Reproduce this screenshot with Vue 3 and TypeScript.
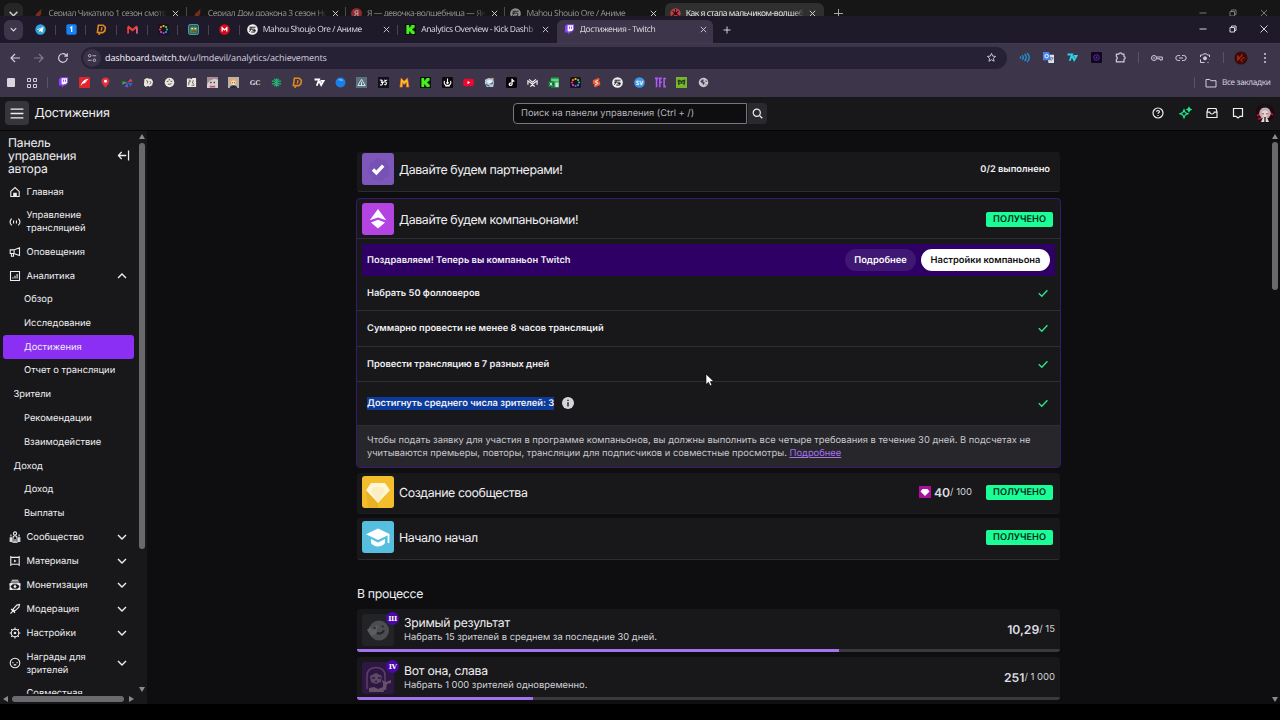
<script setup lang="ts">
interface NavItem {
  label: string
  kind: 'top' | 'sub' | 'group'
  icon?: string
  chevron?: 'up' | 'down'
  active?: boolean
  tall?: boolean
}

interface Tab {
  icon: string
  title: string
  cls?: string
}

const backTabs: Tab[] = [
  { icon: 'flame', title: 'Сериал Чикатило 1 сезон смотрет' },
  { icon: 'flame', title: 'Сериал Дом дракона 3 сезон Нов' },
  { icon: 'ya', title: 'Я — девочка-волшебница — Янд' },
  { icon: 'shikiGrey', title: 'Mahou Shoujo Ore / Аниме' },
  { icon: 'redball', title: 'Как я стала мальчиком-волшебни', cls: 'on' },
]

const pinned: string[] = ['telegram', 'one', 'donate', 'gmail', 'petals', 'frog', 'mega']

const tabs: Tab[] = [
  { icon: 'shiki', title: 'Mahou Shoujo Ore / Аниме' },
  { icon: 'kick', title: 'Analytics Overview - Kick Dashb' },
  { icon: 'twitch', title: 'Достижения - Twitch', cls: 'on' },
]

const bookmarks: string[] = [
  'twitch', 'redsq', 'pin', 'pinwheel', 'sketchA', 'sketchB', 'sketchC', 'animeA', 'animeB', 'gc',
  'clover', 'donate', 'seven', 'orb', 'tri', 'om', 'mgold', 'kick', 'anchor', 'youtube', 'animeC',
  'tiktok', 'mwave', 'sheet', 'petals', 'shopS', 'shiki', 'sv', 'tfc', 'robot', 'globe',
]

const nav: NavItem[] = [
  { label: 'Главная', kind: 'top', icon: 'home' },
  { label: 'Управление трансляцией', kind: 'top', icon: 'live', tall: true },
  { label: 'Оповещения', kind: 'top', icon: 'horn' },
  { label: 'Аналитика', kind: 'top', icon: 'chart', chevron: 'up' },
  { label: 'Обзор', kind: 'sub' },
  { label: 'Исследование', kind: 'sub' },
  { label: 'Достижения', kind: 'sub', active: true },
  { label: 'Отчет о трансляции', kind: 'sub' },
  { label: 'Зрители', kind: 'group' },
  { label: 'Рекомендации', kind: 'sub' },
  { label: 'Взаимодействие', kind: 'sub' },
  { label: 'Доход', kind: 'group' },
  { label: 'Доход', kind: 'sub' },
  { label: 'Выплаты', kind: 'sub' },
  { label: 'Сообщество', kind: 'top', icon: 'people', chevron: 'down' },
  { label: 'Материалы', kind: 'top', icon: 'film', chevron: 'down' },
  { label: 'Монетизация', kind: 'top', icon: 'money', chevron: 'down' },
  { label: 'Модерация', kind: 'top', icon: 'sword', chevron: 'down' },
  { label: 'Настройки', kind: 'top', icon: 'gear', chevron: 'down' },
  { label: 'Награды для зрителей', kind: 'top', icon: 'face', chevron: 'down', tall: true },
  { label: 'Совместная', kind: 'top', icon: 'dot' },
]

const goals = [
  { text: 'Набрать 50 фолловеров', cls: 'g1' },
  { text: 'Суммарно провести не менее 8 часов трансляций', cls: 'g2' },
  { text: 'Провести трансляцию в 7 разных дней', cls: 'g3' },
]

const progress = [
  { title: 'Зримый результат', text: 'Набрать 15 зрителей в среднем за последние 30 дней.', now: '10,29', max: '15', pct: 68.6, badge: 'III', icon: 'wave' },
  { title: 'Вот она, слава', text: 'Набрать 1 000 зрителей одновременно.', now: '251', max: '1 000', pct: 25.1, badge: 'IV', icon: 'star' },
]

// Favicons, all on a 12x12 grid
const fav: Record<string, string> = {
  flame: '<path d="M9 0C9 3 3 5 3 8c0 3 1 4 2 4 0-2 3-3 4-6z" fill="#7d2a1c"/>',
  ya: '<circle cx="6" cy="6" r="6" fill="#8d2a2e"/><text x="3.4" y="9" font-size="8.5" font-family="Noto Sans" fill="#ccc">Я</text>',
  shikiGrey: '<circle cx="6" cy="6" r="5.800" fill="#8f8f8f"/><path d="M2.800 3.500h6.500M2.200 5.600h6M4.500 3.500C4.500 6 3.500 7.500 2.500 8.500M4.500 8.800h4V5.600" stroke="#1b1b1b" stroke-width="1" fill="none"/>',
  redball: '<circle cx="6" cy="6" r="5.600" fill="#c63c48"/><path d="M6 1v4M6 6L2 9M6 6l4 3M3 3l1.500 2.500M9 3L7.500 5.500" stroke="#2c1216" stroke-width="1.100"/><circle cx="6" cy="6" r="1.800" fill="#2c1216"/>',
  telegram: '<circle cx="6" cy="6" r="5.600" fill="#2fa5dc"/><path d="M2 6l7.300-3-1.200 6.300-2.300-1.600-1.200 1-.2-2 3-2.600-3.800 2.300z" fill="#fff"/>',
  one: '<rect x=".4" y=".4" width="11.200" height="11.200" rx="2" fill="#1681f5"/><path d="M4.500 4.300L6.200 3.200v5.600" stroke="#fff" stroke-width="1.400" fill="none"/>',
  donate: '<path d="M2.600 1.300h5.200l2.400 2.300-.6 4-2.300 1.800H4.800L3.500 11 3.600 9.300H1.500z" fill="none" stroke="#e08a1e" stroke-width="1.700"/><path d="M6.500 3.500L5.800 7.200" stroke="#e08a1e" stroke-width="1.500"/>',
  gmail: '<path d="M1.200 10.500V3" stroke="#e8384a" stroke-width="2"/><path d="M10.800 10.500V3" stroke="#d95a9a" stroke-width="2"/><path d="M1 2.600l5 4 5-4" stroke="#ea4335" stroke-width="2.300" fill="none"/>',
  petals: '<rect width="12" height="12" rx="2" fill="#16141c"/><g stroke-width="2.400" stroke-linecap="round" fill="none"><path d="M6 2.200h.1" stroke="#f8c21c"/><path d="M8.800 3.300h.1" stroke="#6ac93f"/><path d="M9.800 6h.1" stroke="#22b8a0"/><path d="M8.700 8.800h.1" stroke="#3a8cf0"/><path d="M6 9.800h.1" stroke="#8354e8"/><path d="M3.200 8.800h.1" stroke="#d63ec0"/><path d="M2.100 6h.1" stroke="#ef3a5a"/><path d="M3.200 3.300h.1" stroke="#f77c28"/></g>',
  frog: '<rect x=".5" y=".5" width="11" height="11" rx="2" fill="#2d5a55" stroke="#4aa3d8"/><path d="M2 10V6c0-3 2-4 4-3 3-1 5 1 4 4l-1 3z" fill="#4b8a44"/><path d="M3.500 5h2M7 5h2" stroke="#e0e3c8" stroke-width="1.300"/><path d="M4 8h5" stroke="#8c4a2c" stroke-width="1.400"/>',
  mega: '<circle cx="6" cy="6" r="5.700" fill="#d90a1c"/><path d="M3.500 8.300V4.100L6 6.500l2.500-2.400v4.200" stroke="#fff" stroke-width="1.400" fill="none"/>',
  shiki: '<circle cx="6" cy="6" r="5.800" fill="#f1f1f1"/><path d="M2.800 3.500h6.500M2.200 5.600h6M4.500 3.500C4.500 6 3.500 7.500 2.500 8.500M4.500 8.800h4V5.600M6 7.200h3.500" stroke="#17171b" stroke-width="1" fill="none"/>',
  kick: '<rect width="12" height="12" fill="#0a120a"/><path d="M1.500 1h3v2.800h1.200V2.500h1.200V1h3.600v3H9.200v1.200H8v1.600h1.200V8h1.300v3H6.900V9.500H5.700V8.200H4.500V11h-3z" fill="#46f21c"/>',
  twitch: '<path d="M3.200.3H11v6.200L8.200 9.200H6.300L4.300 11.700V9.200H1V2.500z" fill="#8b45f6"/><path d="M4 1.300h6v4.800L8.300 7.700H6.500L5.100 9V7.700H4z" fill="#fff"/><path d="M6 2.800v2.500M8.200 2.800v2.500" stroke="#8b45f6"/>',
  redsq: '<rect width="12" height="12" rx="1" fill="#e3242f"/><path d="M1.800 9.800C3 5 6 2.300 10.200 2.300 9 4 8 4.600 6.500 4.900h2C7 7 4.600 7 3.900 7.400z" fill="#fff"/>',
  pin: '<path d="M6 .6c3 0 4.300 2 4.300 4 0 3-3 4.700-4.300 7-1.300-2.300-4.300-4-4.300-7 0-2 1.300-4 4.300-4z" fill="#e33040"/><circle cx="6" cy="4.600" r="1.600" fill="#fff"/>',
  pinwheel: '<path d="M5.800 6L6 2l3-.8z" fill="#28365c"/><path d="M6 5.500l3.500-4L11.500 5z" fill="#e6404c"/><path d="M6 6l5.500.5-2 4z" fill="#2d62d2"/><path d="M6 6l1 5.500-4-1z" fill="#7a4ad8"/><path d="M6 6L.3 8.500.5 4.500z" fill="#26b34b"/>',
  sketchA: '<path d="M1.500 2.500l3-1.500 2 1h2.500l2 3-1 4-3 1.500-1-1-3 1.500-2-2z" fill="#ebe7dc"/><path d="M3.500 4l1.700.5L4.800 7M7.500 4.500l1 1.500-1 2" stroke="#5a5348" stroke-width=".900" fill="none"/>',
  sketchB: '<circle cx="6" cy="6" r="5.200" fill="#ebe8df"/><path d="M3 5l2-.5M7 4.500l2 .5M4.200 7.500l1.500.5 2.500-.7M5.800 2v1.600" stroke="#55504a" stroke-width="1" fill="none"/>',
  sketchC: '<path d="M1 1.500h4l1 1 1-1.500h4V11H1z" fill="#ebe8df"/><path d="M3 3.500h1.500v2H3V9M8 3.500l-1 3 2 1.500M6 9h3" stroke="#55504a" stroke-width=".900" fill="none"/>',
  animeA: '<rect width="12" height="12" fill="#d8cfcf"/><path d="M0 0h12v3L8 2 3 4 0 8z" fill="#a48d96"/><path d="M3.500 6h1.600M7.200 6h1.500" stroke="#46303a" stroke-width="1.500"/><path d="M3 10.500h6" stroke="#c05a72" stroke-width="2"/>',
  animeB: '<rect width="12" height="12" fill="#b5b2b0"/><path d="M2 5c0-5 8-5 8 0l-1 3H3z" fill="#f0ab5a"/><circle cx="6" cy="6.500" r="2.600" fill="#f4dec6"/><path d="M2 12c0-4 8-4 8 0z" fill="#2c2d32"/><path d="M4.300 6.300h1M6.800 6.300h1" stroke="#422"/>',
  gc: '<text x="-.3" y="8.800" font-size="7.800" font-weight="700" font-family="Liberation Serif" fill="#e4e1ea">GC</text>',
  clover: '<g fill="none" stroke="#20b873" stroke-width="1.300"><path d="M6 1.500v3L3.500 2M6 4.500L8.500 2M6 10.500v-3L3.500 10M6 7.500L8.500 10M1 4.500h2.500L6 6.800 8.500 4.500H11M1 7.500h2.500L6 5.200l2.500 2.300H11"/></g>',
  seven: '<path d="M.6 2.700h5L3 9.500M5.800 4.700l2 4 2.600-4.500H7" fill="none" stroke="#fff" stroke-width="2"/>',
  seven7: '<path d="M.6 2.700h5L3 9.500M5.800 4.700l2 4 2.600-4.500H7" fill="none" stroke="#2fd3e6" stroke-width="2"/>',
  orb: '<circle cx="6" cy="6" r="5.400" fill="#1b7fe8"/><path d="M3 3.500C4 1.500 8 1.500 9 4 7.500 5 5 3 3 3.500z" fill="#63b4ff"/>',
  tri: '<rect width="12" height="12" fill="#5b727d"/><path d="M6 2.500L2 9.300h8zM6 5.500v3.500" fill="none" stroke="#e1edf0" stroke-width="1"/>',
  om: '<rect width="12" height="12" fill="#101018"/><path d="M2 3.600c3-1.200 3.600 1.900 1.100 2.100 3.200 0 2.200 4-.9 2.900M5.200 6c1.700-1.200 2.600-1.400 3.800 0 .8 2-1.300 3.200-2 2M6.700 3c1 1.200 2.300 1.200 3.300 0" fill="none" stroke="#fff" stroke-width="1.200"/>',
  mgold: '<path d="M1 11L2.300 1.200l3.300 3.500L9.300 1l1.500 10H8.200L8 5.800 5.600 8.200 3.800 6.200l-.2 4.800z" fill="#ffc32a" stroke="#f0711c" stroke-width=".700"/>',
  anchor: '<rect width="12" height="12" rx="1" fill="#0c0c0f"/><path d="M6 1.700v5.600M4.800 5.800L6 7.300l1.200-1.500M2.600 4.300c-2 6.700 8.800 6.700 6.800 0M3.500 9.800h5" fill="none" stroke="#fff" stroke-width="1.200"/>',
  youtube: '<rect x=".2" y="2" width="11.600" height="8.200" rx="2.200" fill="#f0072d"/><path d="M4.900 4.300v3.500L7.900 6z" fill="#fff"/>',
  animeC: '<path d="M1 3l4-2 5 1 1 4-1 5H3L1 7z" fill="#b7c9d6"/><path d="M3 4l5-1 1 3-4 1z" fill="#e9f0f2"/><path d="M2 8l4 2M7 8l3-2" stroke="#3c6480" stroke-width="1.300"/><path d="M8 1l3 1" stroke="#d07c5a" stroke-width="1.200"/>',
  tiktok: '<rect width="12" height="12" rx="2" fill="#050507"/><path d="M6.600 2v5.500c0 2.600-3.500 2-3 .2.300-1 1.200-1.200 2-1M6.600 2.300c.3 1.500 1.300 2.200 2.600 2.200" fill="none" stroke="#fff" stroke-width="1.400"/>',
  mwave: '<path d="M1 8.500V4.200L6 8l5-3.800v4.300M2.300 2.600L6 5.600l3.700-3M3.500 10.300L6 8.700l2.500 1.600" fill="none" stroke="#f0f0f4" stroke-width="1.300"/>',
  sheet: '<rect x="3" y=".5" width="9" height="11" rx="1" fill="#21a35c"/><path d="M3.500 3.500h8" stroke="#6bdb63" stroke-width="2.500"/><path d="M8 6h3.500v5H8z" fill="#bfe8cc"/><rect y="4.500" width="6.500" height="6.500" rx="1" fill="#107038"/><path d="M2 6l2.500 3.500M4.500 6L2 9.500" stroke="#fff" stroke-width=".900"/>',
  shopS: '<path d="M8.600.8L2 3.500v4L4.300 8 3 9l1.200 2.500L10 8.600V5.500L7.800 4l1.600-.8z" fill="#f05a36"/><path d="M7.800 3.700L4.300 5l3.500 2-3.500 1.800" stroke="#fff" stroke-width=".900" fill="none"/>',
  sv: '<circle cx="6" cy="6" r="5.800" fill="#3b96e4"/><text x="2" y="8.400" font-size="6.600" font-weight="700" font-family="Open Sans" fill="#fff">SV</text>',
  tfc: '<path d="M-.3 1.500h4M1.700 1v10.300M5.300 11.300V1.500h2.200M5.500 5.800h2M12 1.700H9.900v8.800H12" fill="none" stroke="#b05cf8" stroke-width="1.700"/>',
  robot: '<rect width="12" height="12" fill="#77b52d"/><path d="M1.800 3h2L6 4l2.200-1h2l-.6 5.500H2.400z" fill="#22401a"/><path d="M3.700 5.700h1.300M7 5.700h1.300M4 8h4" stroke="#a8de56" stroke-width="1.100"/>',
  globe: '<circle cx="6" cy="6" r="5.200" fill="#c6c4cc"/><path d="M2.500 5l2-2.300 2 .3-1 2 2 1-1.500 3-1-2zM8 3.200l2.200 1.800-1.700.5zM8.500 7.500l1 .3-1.300 1.500z" fill="#474253"/>',
  waves: '<path d="M1.200 4.800c.8.700.8 1.700 0 2.400M3.500 3.500c1.500 1.300 1.500 3.700 0 5M6 2.300c2.500 2 2.500 5.400 0 7.400M8.600 1c3.500 3 3.500 7 0 10" fill="none" stroke="#1f95dd" stroke-width="1.500"/>',
  translate: '<path d="M4.500 3H12v9H6z" fill="#dfe2e6"/><path d="M0 0h6.500L9 9H0z" fill="#4a84ea"/><circle cx="4" cy="4.500" r="1.900" fill="none" stroke="#fff" stroke-width="1"/><path d="M8 6.500h3.500M9.700 5.500v1M10.700 6.500C10.400 8.500 9 9.500 8.500 10" stroke="#5a6b85" stroke-width=".800" fill="none"/>',
  violet: '<rect width="12" height="12" rx="1" fill="#100820"/><circle cx="6" cy="6" r="3" fill="none" stroke="#6b2fb5" stroke-width="1"/><circle cx="6" cy="6" r="1" fill="#6b2fb5"/>',
  puzzle: '<path d="M1.500 2.300h2.800c0-1.700 3.200-1.700 3.200 0h2.300v2.600c1.700 0 1.700 2.900 0 2.900v3H1.500V8c1.500-.2 1.500-2.600 0-2.800z" fill="none" stroke="#d2ccdd" stroke-width="1.300" stroke-linejoin="round"/>',
}

// Creator dashboard icons on a 20x20 grid
const ui: Record<string, string> = {
  home: '<path d="M3 9l7-6.500L17 9v8.500H3z"/><path d="M8 17v-5h4v5z" fill="currentColor"/>',
  live: '<path d="M4.500 4.500C1 8 1 12 4.500 15.500M15.500 4.500C19 8 19 12 15.500 15.500M7.600 7.500v5M12.400 7.500v5"/>',
  horn: '<path d="M2 6.500h6L17.500 3v13L8 12.500H2zM8.500 6.500v6M4 12.500V17h3.500v-4"/>',
  chart: '<path d="M2.500 2.500h15v15h-15zM6.500 14v-2M10 14V9.500M13.500 14V6.500"/>',
  people: '<circle cx="10" cy="4" r="2.600"/><path d="M6.500 18.500v-6c0-6 7-6 7 0v6zM10 13.500v4M3.200 9V6M16.800 9V6M2 18.500v-7h2v7M18 18.500v-7h-2v7"/>',
  film: '<path d="M3 1.500v17M17 1.500v17M3 4h14M3 15.500h14"/><path d="M8.500 7.500l4 2.500-4 2.500z" fill="currentColor" stroke="none"/>',
  money: '<path d="M4.500 2h11M3 5h14"/><path d="M2 8h16v9H2z"/><path d="M2 8h3.500L3 10.500H2zM18 8h-3.500l2.500 2.500h1zM2 17h3l-2-2.500zM18 17h-3l2-2.500z" fill="currentColor"/><path d="M10 11l1.500 1.500L10 14l-1.500-1.500z" fill="currentColor"/>',
  sword: '<path d="M6.500 10.500L13 3.500l4.500-1-1 4.500-7 6.500zM3.500 10l6.500 6.500M6.500 13.500L2.500 17.500"/>',
  gear: '<circle cx="10" cy="10" r="6.300"/><circle cx="10" cy="10" r="1.300" fill="currentColor"/><path d="M10 1v3M10 16v3M1 10h3M16 10h3M3.700 3.700l2 2M14.300 14.300l2 2M3.700 16.300l2-2M14.300 5.700l2-2"/>',
  face: '<circle cx="10" cy="10" r="8"/><path d="M6.500 8.500v2M13.500 8.500v2M8 12.500c1 1 3 1 4 0"/>',
  dot: '<path d="M9 13h1.500"/>',
}
</script>

<template>
  <div class="screen">
    <div class="back-window">
      <div class="chev-btn grey"><svg viewBox="0 0 10 10"><path d="M1.500 3.500L5 7l3.500-3.500" /></svg></div>
      <div v-for="(t, i) in backTabs" :key="i" class="back-tab" :class="t.cls">
        <svg class="fav" viewBox="0 0 12 12" v-html="fav[t.icon]"></svg>
        <span class="tab-title">{{ t.title }}</span>
        <svg class="x" viewBox="0 0 10 10"><path d="M2 2l6 6M8 2L2 8" /></svg>
      </div>
      <svg class="plus" viewBox="0 0 10 10"><path d="M5 0v10M0 5h10" /></svg>
      <div class="win-btns"><svg viewBox="0 0 10 10"><path d="M1.500 5h7" /></svg><svg viewBox="0 0 10 10"><path d="M2 3.500h4.500V8H2zM3.500 3.500V2H8v4.500H6.500" /></svg><svg viewBox="0 0 10 10"><path d="M2 2l6 6M8 2L2 8" /></svg></div>
    </div>

    <div class="tab-strip">
      <div class="chev-btn"><svg viewBox="0 0 10 10"><path d="M2 3.500L5 6.500l3-3" /></svg></div>
      <div v-for="p in pinned" :key="p" class="pinned"><svg class="fav" viewBox="0 0 12 12" v-html="fav[p]"></svg></div>
      <div v-for="t in tabs" :key="t.title" class="tab" :class="t.cls">
        <svg class="fav" viewBox="0 0 12 12" v-html="fav[t.icon]"></svg>
        <span class="tab-title">{{ t.title }}</span>
        <svg class="x" viewBox="0 0 10 10"><path d="M2 2l6 6M8 2L2 8" /></svg>
      </div>
      <svg class="plus" viewBox="0 0 10 10"><path d="M5 1.500v7M1.500 5h7" /></svg>
      <div class="win-btns"><svg viewBox="0 0 10 10"><path d="M1.500 5h7" /></svg><svg viewBox="0 0 10 10"><path d="M2 3.500h4.500V8H2zM3.500 3.500V2H8v4.500H6.500" /></svg><svg viewBox="0 0 10 10"><path d="M1.500 1.500l7 7M8.500 1.500l-7 7" /></svg></div>
    </div>

    <div class="toolbar">
      <div class="tool"><svg viewBox="0 0 12 12"><path d="M11 6H2M6 2L2 6l4 4" /></svg></div>
      <div class="tool dim"><svg viewBox="0 0 12 12"><path d="M1 6h9M6 2l4 4-4 4" /></svg></div>
      <div class="tool"><svg viewBox="0 0 12 12"><path d="M10.200 6A4.300 4.300 0 1 1 8.800 2.800L10 4M10.300 1.200v3H7.300" /></svg></div>
      <div class="omnibox">
        <div class="site"><svg viewBox="0 0 12 12"><circle cx="3.200" cy="3.300" r="1.500" /><path d="M6.500 3.300h4.500M1 8.700h4.500" /><circle cx="8.900" cy="8.700" r="1.500" /></svg></div>
        <span class="url"><b>dashboard.twitch.tv</b>/u/lmdevil/analytics/achievements</span>
        <svg class="starred" viewBox="0 0 12 12"><path d="M6 1.500l1.300 3 3.200.3-2.400 2.100.7 3.200L6 8.400l-2.800 1.700.7-3.200L1.500 4.800l3.200-.3z" /></svg>
      </div>
      <div class="exts">
        <div class="ext"><svg class="fav" viewBox="0 0 12 12" v-html="fav.waves"></svg></div>
        <div class="ext"><svg class="fav" viewBox="0 0 12 12" v-html="fav.translate"></svg></div>
        <div class="ext"><svg class="fav" viewBox="0 0 12 12" v-html="fav.seven7"></svg></div>
        <div class="ext"><svg class="fav" viewBox="0 0 12 12" v-html="fav.violet"></svg></div>
        <div class="ext"><svg class="fav" viewBox="0 0 12 12" v-html="fav.puzzle"></svg></div>
      </div>
      <i class="vsep"></i>
      <div class="exts second">
        <div class="ext"><svg class="line" viewBox="0 0 12 12"><circle cx="3" cy="6" r="2.500" /><circle cx="3" cy="6" r=".4" /><path d="M5.500 5h5.800v3H9V6.800H5.500" /></svg></div>
        <div class="ext"><svg class="line" viewBox="0 0 12 12"><path d="M5 3.500H3.300a2.500 2.500 0 0 0 0 5H5M7 3.500h1.700a2.500 2.500 0 0 1 0 5H7M4 6h4" /></svg></div>
        <div class="ext"><svg class="line" viewBox="0 0 12 12"><path d="M1.500 5V3h2.200l.8-1.200h3L8.300 3h2.200v2M1.500 7.500v3h4M10.500 7.500v.3M8.500 10.500h1" /><circle cx="6" cy="6.300" r="1.500" fill="#d2ccdd" /></svg></div>
      </div>
      <i class="vsep"></i>
      <svg class="profile" viewBox="0 0 14 14"><circle cx="7" cy="7" r="6.600" fill="#3a0d0c" /><path d="M3 4l3 2 2-4 1 4 3 1-4 1 1 4-3-3-3 1z" fill="#a82012" /><path d="M5 10l2-3 3-2" stroke="#160504" /></svg>
      <svg class="kebab" viewBox="0 0 4 12"><circle cx="2" cy="2" r="1" /><circle cx="2" cy="6" r="1" /><circle cx="2" cy="10" r="1" /></svg>
    </div>

    <div class="bookmarks">
      <i class="apps-square"></i>
      <svg class="grid-ico" viewBox="0 0 12 12"><path d="M1.500 1.500h3v3h-3zM7.500 1.500h3v3h-3zM1.500 7.500h3v3h-3zM7.500 7.500h3v3h-3z" /></svg>
      <i class="vsep"></i>
      <div v-for="(b, i) in bookmarks" :key="i" class="bm"><svg class="fav" viewBox="0 0 12 12" v-html="fav[b]"></svg></div>
      <i class="vsep last"></i>
      <svg class="folder" viewBox="0 0 12 12"><path d="M1 2.500h3.800L6 3.700h5v6.300H1z" /></svg>
      <span class="all">Все закладки</span>
    </div>

    <div class="topbar">
      <div class="burger"><svg viewBox="0 0 14 12"><path d="M0 1.200h14M0 6h14M0 10.800h14" /></svg></div>
      <h1>Достижения</h1>
      <div class="search">
        <div class="field">Поиск на панели управления (Ctrl + /)</div>
        <div class="go"><svg viewBox="0 0 12 12"><circle cx="5.200" cy="5.200" r="3.900" /><path d="M8.200 8.200l3 3" /></svg></div>
      </div>
      <div class="actions">
        <svg viewBox="0 0 14 14"><circle cx="7" cy="7" r="5" /><path d="M5.600 5.800c0-1.800 2.900-1.700 2.800 0 0 1-1.400 1-1.400 2M7 9v1" /></svg>
        <svg class="green" viewBox="0 0 14 14"><path d="M6 3.800l1.200 2.800L10 7.800 7.200 9 6 11.800 4.800 9 2 7.800l2.800-1.200z" /><path d="M11 1.500l.7 1.300 1.300.7-1.300.7L11 5.500l-.7-1.300L9 3.500l1.300-.7z" fill="#1fe48a" /></svg>
        <svg viewBox="0 0 14 14"><path d="M3 2.500h8l1 3.500v5.500H2V6zM2 6.200h2.800c.3 2.400 4.100 2.400 4.400 0H12" /></svg>
        <svg viewBox="0 0 14 14"><path d="M2.500 2.500h9v7.800H9L7 12l-2-1.700H2.500z" /></svg>
        <svg class="avatar" viewBox="0 0 20 20"><circle cx="10" cy="10" r="9.500" fill="#26060c" /><path d="M2 13l4-3M18 12l-4-3M3 16l4-1" stroke="#a11a2d" stroke-width="2" /><path d="M4.500 12c-2-10 13-10 11 0l-2 3h-7z" fill="#b9b2b4" /><path d="M3.500 5C7 0 13 0 16.500 5L10 4.200z" fill="#191216" /><path d="M7 9c0-2 6-2 6 0v3l-3 2.500L7 12z" fill="#ecd2ce" /><path d="M8 10v1.500M12 10v1.500" stroke="#8b3340" /><path d="M6 19l2-4.500h4l2 4.500z" fill="#ddd" /><path d="M10 14v5" stroke="#2a1a1e" stroke-width="1.400" /></svg>
      </div>
    </div>

    <div class="body">
      <aside class="sidebar">
        <div class="side-content">
          <div class="side-head">
            <span>Панель управления автора</span>
            <svg viewBox="0 0 14 12"><path d="M10 6H1.500M5 2L1.500 6 5 10M12.500 .5v11" /></svg>
          </div>
          <div v-for="(n, i) in nav" :key="i" class="item" :class="[n.kind, { active: n.active, tall: n.tall }]">
            <svg v-if="n.icon" class="nav-ico" viewBox="0 0 20 20" v-html="ui[n.icon]"></svg>
            <span class="label">{{ n.label }}</span>
            <svg v-if="n.chevron" class="chev" :class="n.chevron" viewBox="0 0 10 10"><path d="M1 3l4 4 4-4" /></svg>
          </div>
        </div>
        <div class="hbar"><i class="tri left"></i><i class="thumb"></i><i class="tri right"></i></div>
        <div class="vbar"><i class="tri up"></i><i class="thumb"></i><i class="tri down"></i></div>
      </aside>

      <main class="content">
        <div class="column">
          <section class="card first">
            <svg class="tile" viewBox="0 0 32 32"><rect width="32" height="32" rx="3" fill="#7e57ba" /><path d="M15 4.500l4 2.200 4.600.3 1.600 4.300 3.300 3.200-1.500 4.300.2 4.500-4.300 1.700-3.100 3.400-4.300-1.600-4.600.3-1.600-4.300L6 19.600l1.500-4.300-.2-4.500 4.300-1.700z" fill="#7851b4" /><path d="M11 16.500l3.400 3.400 6.800-7.300" fill="none" stroke="#fff" stroke-width="3.400" /></svg>
            <h2>Давайте будем партнерами!</h2>
            <span class="done">0/2 выполнено</span>
          </section>

          <section class="companion">
            <div class="comp-head">
              <svg class="tile" viewBox="0 0 32 32"><rect width="32" height="32" rx="3" fill="#b344e2" /><path d="M16 6l8.300 11.300L16 14.500l-8.300 2.800z" fill="#fff" /><path d="M16 16.700l7 2.900-7 6-7-6z" fill="#fff" /></svg>
              <h2>Давайте будем компаньонами!</h2>
              <span class="tag">ПОЛУЧЕНО</span>
            </div>
            <div class="banner">
              <span class="congrats">Поздравляем! Теперь вы компаньон Twitch</span>
              <button class="btn ghost">Подробнее</button>
              <button class="btn solid">Настройки компаньона</button>
            </div>
            <div v-for="g in goals" :key="g.cls" class="goal" :class="g.cls">
              <span class="goal-text">{{ g.text }}</span>
              <svg class="ok" viewBox="0 0 12 12"><path d="M1.800 6.200l3 3 5.600-5.900" /></svg>
            </div>
            <div class="goal g4">
              <span class="selected">Достигнуть среднего числа зрителей: 3</span>
              <svg class="info" viewBox="0 0 12 12"><circle cx="6" cy="6" r="6" fill="#d6d6da" /><path d="M6 5.200V9.400M6 2.700v1.400" stroke="#26262c" stroke-width="1.500" /></svg>
              <svg class="ok" viewBox="0 0 12 12"><path d="M1.800 6.200l3 3 5.600-5.900" /></svg>
            </div>
            <div class="note">
              <div>Чтобы подать заявку для участия в программе компаньонов, вы должны выполнить все четыре требования в течение 30 дней. В подсчетах не</div>
              <div>учитываются премьеры, повторы, трансляции для подписчиков и совместные просмотры. <a>Подробнее</a></div>
            </div>
          </section>

          <section class="card third">
            <svg class="tile" viewBox="0 0 32 32"><rect width="32" height="32" rx="3" fill="#f3bd2b" /><path d="M4 14l12 13v5H6z" fill="#e9b224" /><path d="M9 7h14l5 7.200L16 27 4 14.200z" fill="#fff6d8" /><path d="M9 14.200L16 27l7-12.800-3-3.200h-8z" fill="#faeec2" /></svg>
            <h2>Создание сообщества</h2>
            <div class="score"><i class="gem"><svg viewBox="0 0 12 12"><path d="M3.500 3h5l2 2.500L6 10 1.500 5.500z" fill="#fff" /></svg></i><b>40</b><span>/ 100</span></div>
            <span class="tag">ПОЛУЧЕНО</span>
          </section>

          <section class="card fourth">
            <svg class="tile" viewBox="0 0 32 32"><rect width="32" height="32" rx="3" fill="#56bfe0" /><path d="M16 7.500l12 5.800L16 19 4 13.300z" fill="#fff" /><path d="M9 18l7 3.500 7-3.500v4c-3 4.500-11 4.500-14 0z" fill="#fff" /><path d="M26.500 14v8" stroke="#fff" stroke-width="1.800" /></svg>
            <h2>Начало начал</h2>
            <span class="tag">ПОЛУЧЕНО</span>
          </section>

          <h3>В процессе</h3>

          <section v-for="p in progress" :key="p.title" class="prog">
            <div class="prog-row">
              <div class="badge-wrap">
                <svg v-if="p.icon === 'wave'" class="tile" viewBox="0 0 32 32"><rect width="32" height="32" rx="3" fill="#212327" /><circle cx="17" cy="16.500" r="10" fill="#4c4d51" /><path d="M5 16l3-3 3 3 3-5 2 1-2 8-5 2z" fill="#5b5c60" /><path d="M12 13.500l1.500 1M20 12l1.500 1M15 19c3 1.500 6 0 7-3" stroke="#232428" stroke-width="2" fill="none" /></svg>
                <svg v-else class="tile" viewBox="0 0 32 32"><rect width="32" height="32" rx="3" fill="#2f1743" /><path d="M5 27V13C5 3 23 3 23 13v7" fill="none" stroke="#5a4268" stroke-width="1.500" /><path d="M8 14l6-3 6 3-1 6-5 2-5-2z" fill="#5d4a64" /><path d="M10 16h3M16 16h3M13 19.500h2" stroke="#2b183c" stroke-width="1.500" /><path d="M7 30v-4l5-1 4 2 5-2 1 5zM20 18l4 2 5-2v3l-4 1-1 6h-3v-6z" fill="#66506a" /></svg>
                <span class="roman">{{ p.badge }}</span>
              </div>
              <div class="prog-text">
                <div class="prog-title">{{ p.title }}</div>
                <div class="prog-sub">{{ p.text }}</div>
              </div>
              <div class="count"><b>{{ p.now }}</b><span>/ {{ p.max }}</span></div>
            </div>
            <div class="track"><i :style="{ width: p.pct + '%' }"></i></div>
          </section>
        </div>
        <div class="vbar page"><i class="tri up"></i><i class="thumb"></i><i class="tri down"></i></div>
      </main>
    </div>

    <svg class="cursor" viewBox="0 0 10 14"><path d="M1 1v10.500l2.500-2.300 1.600 3.600 1.800-.8-1.600-3.500h3.500z" fill="#fff" stroke="#000" stroke-width=".600" /></svg>
  </div>
</template>

<style>
html, body { margin: 0; background: #000; overflow: hidden; }
</style>

<style scoped>
* { box-sizing: border-box; }
.screen { width: 1280px; height: 720px; overflow: hidden; position: relative; background: #000; color: #efeff1; font-family: Inter, "Noto Sans", sans-serif; font-size: 10px; display: flex; flex-direction: column; text-rendering: geometricPrecision; }
svg { display: block; flex: none; fill: none; stroke: currentColor; stroke-width: 1; }
.fav { width: 11px; height: 11px; stroke: none; }
h1, h2, h3 { margin: 0; font-weight: 400; }
i { display: block; flex: none; }

.back-window { height: 16px; flex: none; background: #161616; display: flex; overflow: hidden; align-items: flex-start; font-family: "Noto Sans", sans-serif; color: #8f8f8f; }
.chev-btn { width: 19px; height: 20px; border-radius: 6px; background: #3d364a; margin: 3.500px 0 0 4px; display: flex; align-items: center; justify-content: center; flex: none; }
.back-window .chev-btn { margin-top: 3px; background: #262626; color: #c8c8c8; }
.chev-btn svg { width: 9px; height: 9px; stroke-width: 1.400; }
.back-window .chev-btn svg { width: 11px; height: 11px; }
.back-tab { width: 159.300px; height: 21px; margin-top: 3px; padding: 0 6.500px 0 5px; display: flex; align-items: center; flex: none; position: relative; }
.back-window .chev-btn + .back-tab { margin-left: 4.500px; }
.back-tab.on { background: #2f2f2f; border-radius: 6px 6px 0 0; color: #e4e4e4; }
.back-tab:nth-of-type(-n+4)::after { content: ""; position: absolute; right: 0; top: 4px; width: 1px; height: 12px; background: #4a4a4a; }
.back-tab .x { color: #dedede; }
.tab-title { flex: 1; min-width: 0; white-space: nowrap; overflow: hidden; margin-left: 5px; font-size: 8.500px; line-height: 14px; letter-spacing: -.45px; -webkit-mask-image: linear-gradient(90deg, #000 90%, transparent); mask-image: linear-gradient(90deg, #000 90%, transparent); }
.x { width: 9px; height: 9px; margin-left: 4px; }
.back-window .plus { width: 9px; height: 9px; margin: 9px 0 0 10px; color: #b5b5b5; }
.win-btns { margin-left: auto; display: flex; gap: 20.700px; padding-right: 11px; }
.win-btns svg { width: 10px; height: 10px; }
.back-window .win-btns { margin-top: 8px; color: #777; }

.tab-strip { height: 27px; flex: none; background: #1f1a29; display: flex; align-items: flex-start; font-family: "Noto Sans", sans-serif; color: #d6d1de; }
.pinned { width: 30.700px; height: 27px; display: flex; align-items: center; justify-content: center; flex: none; position: relative; }
.chev-btn + .pinned { margin-left: 2px; }
.pinned::after, .tab:not(.on)::after { content: ""; position: absolute; right: 0; top: 9px; width: 1px; height: 10px; background: #484153; }
.tab { width: 158.500px; height: 27px; padding: 0 7px 0 7px; display: flex; align-items: center; flex: none; position: relative; }
.tab:nth-of-type(10)::after { display: none; }
.tab.on { width: 156px; margin: 4px 0 0 .500px; height: 23px; padding: 0 5.500px 4px 6.500px; background: #3d364a; border-radius: 6px 6px 0 0; }
.tab-strip .plus { width: 10px; height: 10px; margin: 9px 0 0 8.500px; }
.tab-strip .win-btns { margin-top: 8px; }

.toolbar { height: 29px; flex: none; background: #3d364a; border-top: 1px solid #433b51; display: flex; align-items: center; color: #d2ccdd; font-family: "Noto Sans", sans-serif; padding-left: 3px; padding-bottom: 1px; }
.tool { width: 24px; display: flex; justify-content: center; }
.tool svg { width: 12px; height: 12px; stroke-width: 1.200; }
.dim { opacity: .45; }
.omnibox { margin-left: 6px; width: 926px; height: 22px; border-radius: 11px; background: #272135; display: flex; align-items: center; padding-left: 2px; flex: none; }
.site { width: 18px; height: 18px; border-radius: 50%; background: #3a3348; display: flex; align-items: center; justify-content: center; }
.site svg { width: 10px; height: 10px; }
.url { margin-left: 4px; font-size: 9px; letter-spacing: -.13px; white-space: nowrap; color: #cbc5d5; }
.url b { font-weight: 400; color: #eeeaf4; }
.starred { width: 11px; height: 11px; margin: 0 10px 0 auto; }
.exts { display: flex; margin-left: 5px; }
.ext { width: 24.200px; display: flex; justify-content: center; }
.exts.second { margin-left: 6px; }
.ext .line { width: 12px; height: 12px; }
.vsep { width: 1px; height: 11px; background: #5a5268; margin-left: 5px; }
.profile { width: 14px; height: 14px; margin-left: 10px; stroke: none; }
.kebab { width: 4px; height: 12px; margin-left: 15px; fill: currentColor; stroke: none; }

.bookmarks { height: 25px; flex: none; background: #3d364a; display: flex; align-items: center; color: #d2ccdd; font-family: "Noto Sans", sans-serif; padding-bottom: 4px; }
.apps-square { width: 8px; height: 9px; background: #d9d5e0; margin-left: 7px; border-radius: 1px; }
.grid-ico { width: 12px; height: 12px; margin-left: 11px; }
.bookmarks .vsep { margin: 0 4.500px 0 9px; }
.bm { width: 21.340px; display: flex; justify-content: center; flex: none; }
.bookmarks .vsep.last { margin: 0 0 0 auto; }
.folder { width: 12px; height: 12px; margin-left: 10px; }
.all { font-size: 8.200px; width: 48px; letter-spacing: -.35px; margin: 0 10px 0 5px; white-space: nowrap; }

.topbar { height: 33px; flex: none; background: #18181b; display: flex; align-items: center; padding-bottom: 1px; }
.burger { width: 24px; height: 24px; border-radius: 4px; background: #35353b; margin-left: 5px; display: flex; align-items: center; justify-content: center; }
.burger svg { width: 14px; height: 11px; stroke-width: 1.500; }
h1 { font-size: 12.500px; letter-spacing: -.2px; margin: 1px 0 0 5.500px; width: 478.500px; }
.search { display: flex; }
.field { width: 234px; height: 21px; border: 1px solid #77777d; border-radius: 4px 0 0 4px; background: #0e0e10; color: #b5b5bd; line-height: 20px; padding-left: 7px; font-size: 9.300px; white-space: nowrap; }
.go { width: 19px; height: 21px; background: #2a2a2e; border-radius: 0 4px 4px 0; display: flex; align-items: center; justify-content: center; margin-left: 1px; }
.go svg { width: 11px; height: 11px; stroke-width: 1.300; }
.actions { margin-left: auto; display: flex; align-items: center; gap: 12.700px; padding-right: 5px; }
.actions svg { width: 14px; height: 14px; stroke-width: 1.200; }
.actions .green { color: #1fe48a; }
.actions .avatar { width: 20px; height: 20px; stroke: none; margin-left: -3px; }

.body { height: 574px; flex: none; display: flex; border-top: 1px solid #050506; background: #0e0e10; }
.sidebar { width: 147px; height: 573px; flex: none; background: #18181b; display: grid; grid-template: 563px 10px / 137px 10px; }
.side-content { overflow: hidden; height: 563px; }
.side-head { height: 48.500px; padding: 1px 7px 0 8px; display: flex; justify-content: space-between; align-items: center; font-size: 12.100px; letter-spacing: -.17px; line-height: 13.300px; }
.side-head span { width: 80px; }
.side-head svg { width: 13px; height: 11px; stroke-width: 1.400; }
.item { display: flex; align-items: center; height: 24px; font-size: 9.350px; line-height: 13px; }
.label { padding-top: 1px; }
.item.top:first-of-type .label { padding-top: 0; }
.item.top { padding-left: 9px; }
.item.tall { height: 36px; }
.item.tall .label { width: 78px; }
.item.group { padding-left: 13.500px; }
.item.sub { height: 23.700px; padding-left: 21px; margin: 0 3px; width: 131px; border-radius: 3px; white-space: nowrap; }
.item.active { background: #8b2ff5; }
.nav-ico { width: 12px; height: 12px; stroke-width: 1.800; margin-right: 5.500px; }
.chev { width: 10px; height: 10px; stroke-width: 1.400; margin-left: auto; margin-right: 10px; }
.chev.up { transform: rotate(180deg); }
.hbar { grid-row: 2; grid-column: 1; display: flex; align-items: center; }
.hbar .thumb { width: 112px; height: 6px; border-radius: 3px; background: #6b6b6e; margin: 0 5px 0 4px; }
.vbar { grid-column: 2; grid-row: 1; display: flex; flex-direction: column; align-items: center; }
.vbar .thumb { width: 6px; height: 406px; border-radius: 3px; background: #69696c; margin-top: 4px; }
.tri { width: 0; height: 0; border: 3px solid transparent; }
.tri.up { border-bottom: 5px solid #8b8b8e; border-top: 0; margin-top: 3px; }
.tri.down { border-top: 5px solid #8b8b8e; border-bottom: 0; margin-top: auto; margin-bottom: 2px; }
.tri.left { border-right: 5px solid #8b8b8e; border-left: 0; margin-left: 3px; }
.tri.right { border-left: 5px solid #8b8b8e; border-right: 0; }

.content { flex: 1; display: flex; height: 573px; overflow: hidden; padding-left: 209px; }
.column { width: 705px; padding-top: 21px; }
.vbar.page { margin-left: auto; width: 10px; }
.vbar.page .thumb { height: 148px; margin-top: 3px; }
.card { margin: 0 1px; height: 40px; background: #18181b; border-bottom: 1px solid #2c2c2f; border-radius: 3px; display: flex; padding: 0 7px 0 5px; align-items: flex-start; }
.tile { width: 32px; height: 32px; stroke: none; }
h2 { margin-left: 5px; font-size: 12.400px; line-height: 33px; letter-spacing: -.42px; white-space: nowrap; }
.card .tile, .card h2 { margin-top: 1px; }
.done { margin: 0 3px 0 auto; line-height: 35px; font-weight: 600; font-size: 9.300px; }
.companion { margin-top: 6px; height: 270px; border: 1px solid #351a70; border-radius: 4px; background: #18181b; overflow: hidden; }
.comp-head { height: 40px; border-bottom: 1px solid #2f2f33; padding: 4px 7px 0 5px; display: flex; align-items: flex-start; }
.tag { margin: 9px 0 0 auto; width: 67px; height: 15px; background: #1bfd97; border-radius: 2px; color: #062a18; font-size: 9.200px; font-weight: 600; line-height: 15px; text-align: center; }
.banner { margin: 5px 5px 0; height: 32px; background: #2e0066; display: flex; align-items: center; padding: 0 5px; font-weight: 600; }
.congrats { font-size: 9.300px; margin-right: auto; }
.btn { height: 22px; border: 0; border-radius: 11px; font: 600 9.300px Inter, sans-serif; padding: 0; margin: 0; white-space: nowrap; text-rendering: geometricPrecision; }
.ghost { width: 71px; background: #3e1873; color: #fff; }
.solid { width: 129px; background: #fff; color: #0e0e10; margin-left: 5px; }
.goal { display: flex; align-items: center; padding: 0 11px 0 10px; border-bottom: 1px solid #2f2f33; font-weight: 600; font-size: 9.300px; white-space: nowrap; }
.goal-text { padding-top: 1px; }
.g1 { height: 35px; }
.g2 { height: 35.500px; }
.g3 { height: 35px; }
.g4 { height: 44px; }
.ok { width: 12px; height: 12px; margin-left: auto; color: #2fe592; stroke-width: 1.300; }
.selected { background: #0c3b9c; line-height: 13px; }
.info { width: 12px; height: 12px; margin-left: 7.500px; stroke: none; }
.note { background: #26262b; height: 44px; padding: 8px 10px 0; font-size: 9.350px; line-height: 13.500px; color: #c9c9cf; white-space: nowrap; }
.note a { color: #a873f0; text-decoration: underline; }
.third { margin-top: 5px; height: 41px; }
.third .tile, .third h2 { margin-top: 3px; }
.card.third { border-bottom-color: #1d1d20; }
.third .tag { margin: 12px 0 0 14px; }
.fourth { margin-top: 4px; height: 42px; }
.fourth .tile, .fourth h2 { margin-top: 2.500px; }
.fourth .tag { margin-top: 12px; }
.score { margin-left: auto; display: flex; align-items: center; height: 38px; color: #dedee3; }
.gem { width: 12px; height: 12px; background: #a9109c; margin-right: 2.500px; }
.gem svg { width: 12px; height: 12px; stroke: none; }
.score b, .count b { font-size: 12.200px; font-weight: 600; }
.score span, .count span { font-size: 9.500px; color: #d2d2d8; }
h3 { font-size: 12.300px; letter-spacing: -.33px; line-height: 18px; margin: 25px 0 6px 1px; }
.prog { margin: 0 1px 5px; height: 43px; background: #18181b; border-radius: 3px; overflow: hidden; display: flex; flex-direction: column; }
.prog-row { height: 40px; display: flex; padding: 5px 5px 0; align-items: flex-start; }
.badge-wrap { position: relative; width: 32px; height: 32px; }
.roman { position: absolute; right: -5px; top: -2px; width: 13px; height: 13px; border-radius: 50%; background: #4a08a8; color: #fff; font: 700 7px/13px "DejaVu Serif", serif; letter-spacing: -.5px; text-align: center; }
.prog-text { margin-left: 10px; }
.prog-title { font-size: 12.200px; letter-spacing: -.24px; line-height: 18px; }
.prog-sub { font-size: 9.350px; line-height: 12px; color: #d2d2d8; }
.count { margin-left: auto; line-height: 32px; display: flex; align-items: center; color: #dedee3; }
.track { height: 3px; background: #3a3a3e; }
.track i { height: 3px; background: #a472ef; }
.cursor { position: absolute; left: 705px; top: 373px; width: 10px; height: 14px; }
</style>
